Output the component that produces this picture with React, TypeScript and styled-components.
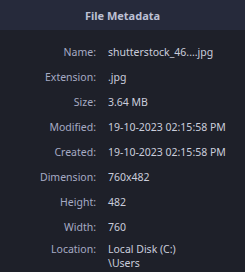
import React from "react";
import styled, { createGlobalStyle } from "styled-components";

const Global = createGlobalStyle`
  html, body { margin: 0; padding: 0; background: #1e2029; }
  body { font-family: "Noto Sans", "Open Sans", sans-serif; }
`;

const Panel = styled.div`
  width: 245px;
  height: 272px;
  background: #1e2029;
  overflow: hidden;
  display: flex;
  flex-direction: column;
`;

const Header = styled.div`
  height: 30px;
  flex: none;
  background: #262a3b;
  display: flex;
  align-items: center;
  justify-content: center;
  padding-top: 1px;
  box-sizing: border-box;
  color: #bcc0d4;
  font-size: 11px;
  font-weight: 700;
`;

const List = styled.div`
  display: flex;
  flex-direction: column;
  gap: 10px;
  padding-top: 15px;
  font-size: 10.5px;
  line-height: 15px;
`;

const Row = styled.div<{ $multi?: boolean }>`
  display: grid;
  grid-template-columns: 96px 1fr;
  column-gap: 12px;
  line-height: ${(p) => (p.$multi ? "14px" : "15px")};
  margin-top: ${(p) => (p.$multi ? "-3px" : "0")};
`;

const Label = styled.div`
  text-align: right;
  color: #a6abc4;
  white-space: nowrap;
`;

const Value = styled.div`
  color: #cacddc;
  white-space: pre-line;
`;

const rows: [string, string][] = [
  ["Name:", "shutterstock_46....jpg"],
  ["Extension:", ".jpg"],
  ["Size:", "3.64 MB"],
  ["Modified:", "19-10-2023 02:15:58 PM"],
  ["Created:", "19-10-2023 02:15:58 PM"],
  ["Dimension:", "760x482"],
  ["Height:", "482"],
  ["Width:", "760"],
  ["Location:", "Local Disk (C:)\n\\Users"],
];

export default function App() {
  return (
    <>
      <Global />
      <Panel>
        <Header>File Metadata</Header>
        <List>
          {rows.map(([k, v]) => (
            <Row key={k} $multi={v.includes("\n")}>
              <Label>{k}</Label>
              <Value>{v}</Value>
            </Row>
          ))}
        </List>
      </Panel>
    </>
  );
}
